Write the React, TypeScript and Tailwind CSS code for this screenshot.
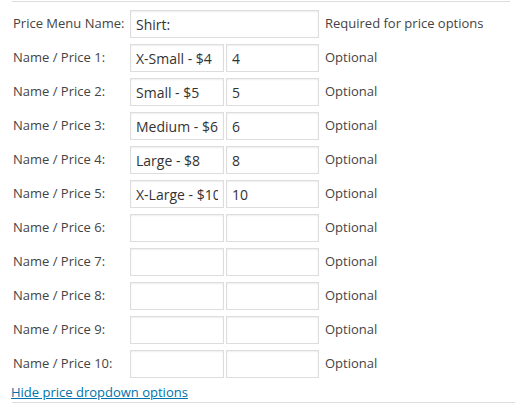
import React from "react";

const rows = [
  { name: "X-Small - $4", price: "4" },
  { name: "Small - $5", price: "5" },
  { name: "Medium - $6", price: "6" },
  { name: "Large - $8", price: "8" },
  { name: "X-Large - $10", price: "10" },
  { name: "", price: "" },
  { name: "", price: "" },
  { name: "", price: "" },
  { name: "", price: "" },
  { name: "", price: "" },
];

const inputCls =
  "h-[28px] border border-[#dddddd] bg-white px-[5px] text-[14px] text-[#333333] shadow-[inset_0_1px_2px_rgba(0,0,0,0.07)] outline-none";

export default function App() {
  return (
    <div
      className="w-[515px] h-[409px] bg-white overflow-hidden"
      style={{ fontFamily: '"Open Sans", sans-serif' }}
    >
      <div className="ml-[12px] w-[498px] mt-[1px] border-t border-[#dddddd] pt-[5px]">
        <div className="flex items-center h-[34px]">
          <div className="w-[118px] pl-[1px] text-[13px] text-[#444444]">Price Menu Name:</div>
          <input className={inputCls + " w-[189px]"} defaultValue="Shirt:" />
          <div className="ml-[6px] text-[13px] text-[#444444]">Required for price options</div>
        </div>
        {rows.map((r, i) => (
          <div key={i} className="flex items-center h-[34px]">
            <div className="w-[118px] pl-[1px] text-[13px] text-[#444444]">Name / Price {i + 1}:</div>
            <input className={inputCls + " w-[94px]"} defaultValue={r.name} />
            <input className={inputCls + " w-[93px] ml-[2px]"} defaultValue={r.price} />
            <div className="ml-[6px] text-[13px] text-[#444444]">Optional</div>
          </div>
        ))}
        <div className="h-[21px] flex items-center -ml-[1px]">
          <a href="#" className="text-[13px] leading-[18px] text-[#0073aa] underline">
            Hide price dropdown options
          </a>
        </div>
        <div className="border-t border-[#dddddd] w-[503px]" />
      </div>
    </div>
  );
}
